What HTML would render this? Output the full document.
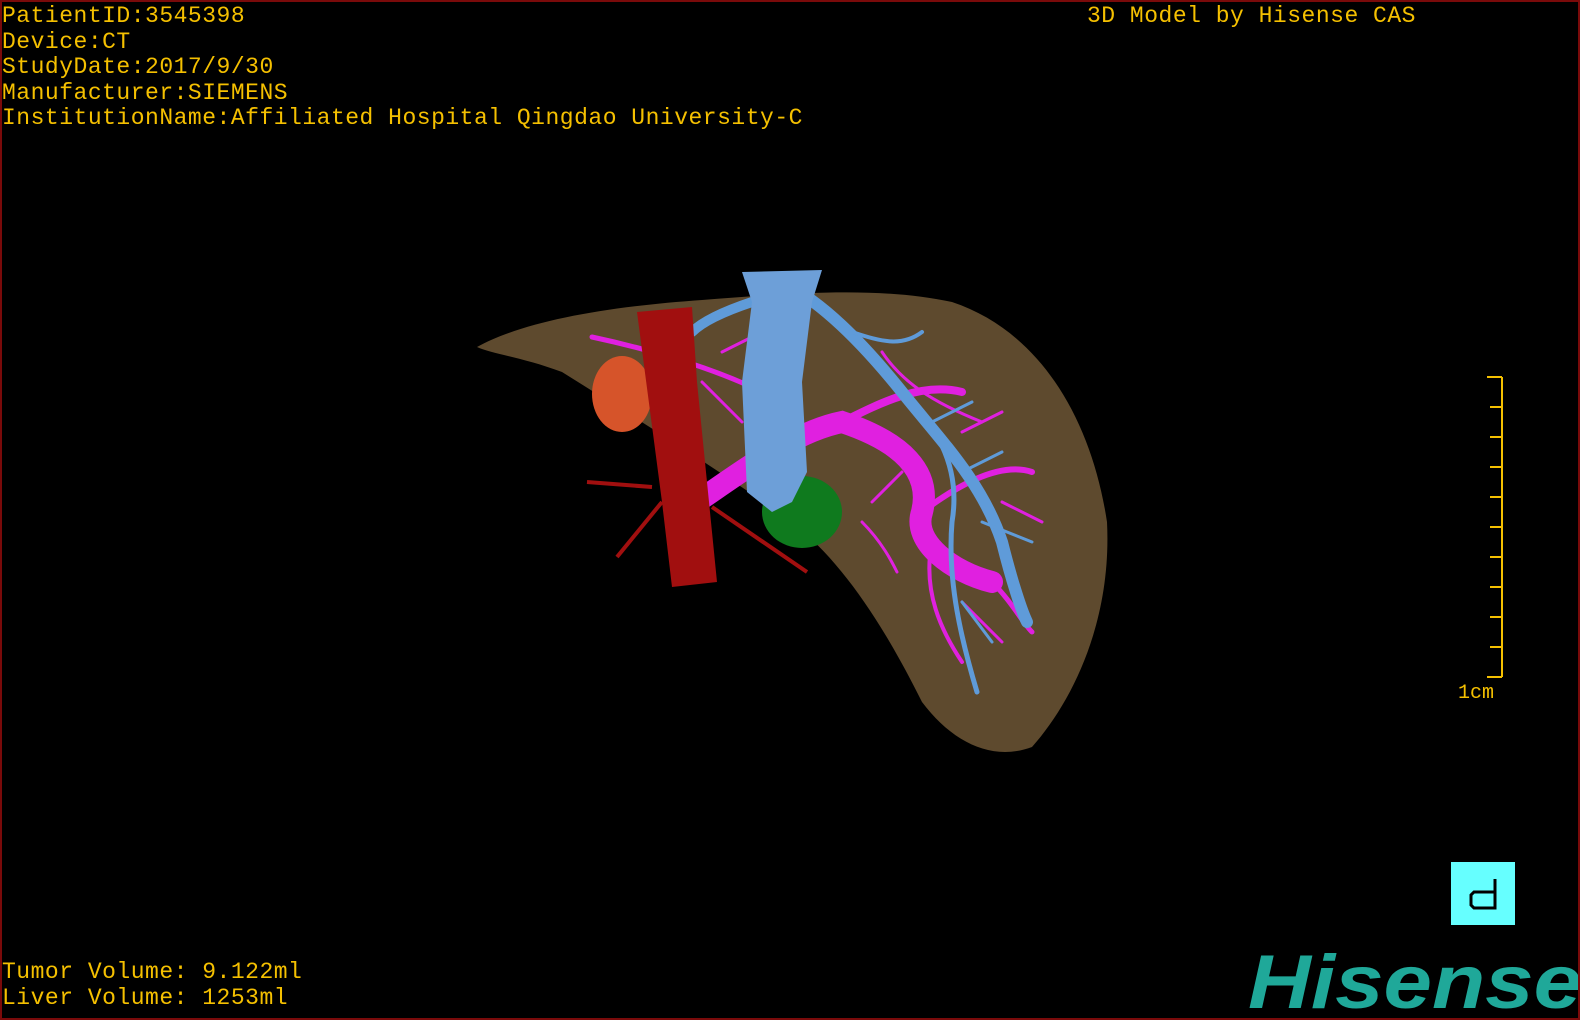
<!DOCTYPE html>
<html><head><meta charset="utf-8"><style>
html,body{margin:0;padding:0;background:#000;}
#v{position:relative;width:1576px;height:1016px;border:2px solid #7a0a0a;overflow:hidden;background:#000;}
.t{position:absolute;color:#f5c000;font-family:"Liberation Mono",monospace;font-size:23px;line-height:25.5px;white-space:pre;letter-spacing:0.5px;}
</style></head><body><div id="v">
<div class="t" style="left:0;top:2px">PatientID:3545398
Device:CT
StudyDate:2017/9/30
Manufacturer:SIEMENS
InstitutionName:Affiliated Hospital Qingdao University-C</div>
<div class="t" style="left:1085px;top:2px">3D Model by Hisense CAS</div>
<div class="t" style="left:0;top:958px">Tumor Volume: 9.122ml
Liver Volume: 1253ml</div>
<svg width="1576" height="1016" style="position:absolute;left:0;top:0">
<path d="M475 345 C520 320 600 305 700 298 C800 290 880 285 950 300 C1040 330 1090 420 1105 520 C1110 620 1070 700 1030 745 C990 760 950 740 920 700 C880 620 840 560 790 520 C720 470 640 420 560 370 C520 355 490 352 475 345Z" fill="#5e4a2e"/>
<ellipse cx="620" cy="392" rx="30" ry="38" fill="#d6542a"/>
<ellipse cx="800" cy="510" rx="40" ry="36" fill="#0f7a1e"/>
<g stroke="#e020e0" fill="none" stroke-linecap="round">
<path d="M680 510 C740 470 790 430 840 420 C900 440 930 470 920 510 C910 540 950 570 990 580" stroke-width="22"/>
<path d="M590 335 C660 350 720 370 760 390" stroke-width="5"/>
<path d="M840 420 C880 400 920 380 960 390" stroke-width="8"/>
<path d="M920 510 C960 480 1000 460 1030 470" stroke-width="6"/>
<path d="M990 580 C1010 600 1020 620 1030 630" stroke-width="5"/>
<path d="M930 540 C920 590 940 630 960 660" stroke-width="4"/>
<path d="M860 520 C880 540 890 560 895 570" stroke-width="3"/>
<path d="M880 350 C900 380 930 400 980 420" stroke-width="3"/>
<path d="M700 380 L740 420 M720 350 L760 330 M960 430 L1000 410 M1000 500 L1040 520 M960 600 L1000 640 M900 470 L870 500" stroke-width="3"/>
</g>
<g stroke="#5f9bd9" fill="none" stroke-linecap="round">
<path d="M780 280 C820 300 860 340 900 390 C940 440 980 480 1000 540 C1010 580 1020 610 1025 620" stroke-width="12"/>
<path d="M750 300 C720 310 700 320 690 330" stroke-width="10"/>
<path d="M900 390 C930 420 960 460 950 520 C945 580 960 640 975 690" stroke-width="5"/>
<path d="M850 330 C880 340 900 345 920 330" stroke-width="4"/>
<path d="M960 470 L1000 450 M980 520 L1030 540 M960 600 L990 640 M930 420 L970 400" stroke-width="3"/>
</g>
<path d="M740 270 L820 268 L810 300 L800 380 L805 470 L790 500 L770 510 L745 490 L740 380 L750 300Z" fill="#6d9fd8"/>
<path d="M635 310 L690 305 L695 380 L715 580 L670 585 L660 500 Z" fill="#a10f0f"/>
<g stroke="#a10f0f" fill="none" stroke-width="4"><path d="M585 480 L650 485"/><path d="M660 500 L615 555"/><path d="M710 505 L805 570"/></g>
<g stroke="#f5c000" stroke-width="2" fill="none">
<path d="M1500 375 V675 M1485 375 H1500 M1485 675 H1500"/>
<path d="M1488 405H1500M1488 435H1500M1488 465H1500M1488 495H1500M1488 525H1500M1488 555H1500M1488 585H1500M1488 615H1500M1488 645H1500"/>
</g>
<text x="1456" y="696" fill="#f5c000" font-family="Liberation Mono,monospace" font-size="20">1cm</text>
<rect x="1449" y="860" width="64" height="63" fill="#66ffff"/>
<path d="M1493 877 V906 H1472 L1469 903 V893 L1472 890 H1493" stroke="#000" stroke-width="3" fill="none"/>
<text x="1246" y="1006" fill="#1fa899" font-family="Liberation Sans,sans-serif" font-weight="bold" font-style="italic" font-size="76" textLength="334" lengthAdjust="spacingAndGlyphs">Hisense</text>
</svg>
</div></body></html>
